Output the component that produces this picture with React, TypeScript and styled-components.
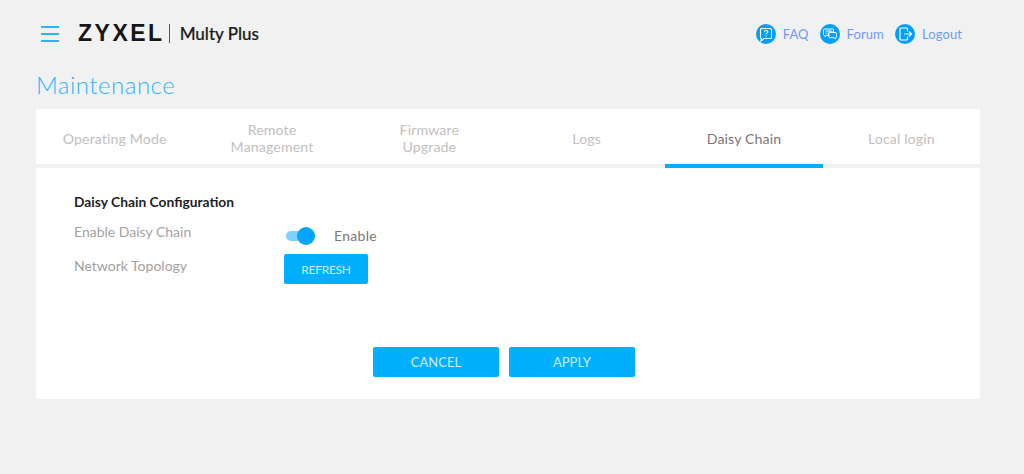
import React from 'react'
import styled, { createGlobalStyle } from 'styled-components'

const GlobalStyle = createGlobalStyle`
  html, body {
    margin: 0;
    padding: 0;
    background: #f1f1f1;
    font-family: "Lato", "Open Sans", sans-serif;
  }
`

const tabs = [
  { label: 'Operating Mode' },
  { label: 'Remote Management' },
  { label: 'Firmware Upgrade' },
  { label: 'Logs' },
  { label: 'Daisy Chain', active: true },
  { label: 'Local login' },
]

export default function App() {
  return (
    <Page>
      <GlobalStyle />
      <Header>
        <Burger aria-label="menu">
          <span />
          <span />
          <span />
        </Burger>
        <Brand>ZYXEL</Brand>
        <Divider />
        <Product>Multy Plus</Product>
        <HeaderLinks>
          <HeaderLink>
            <LinkIcon>
              <svg width="20" height="20" viewBox="0 0 20 20" fill="none" stroke="#fff" strokeWidth="1.1">
                <path d="M5.5 4.5h9a1 1 0 0 1 1 1v8a1 1 0 0 1-1 1H8l-3 2.500.4-2.500a1 1 0 0 1-.9-1v-8a1 1 0 0 1 1-1z" />
                <path d="M8.400 7.900c.1-.9.8-1.400 1.700-1.400s1.700.5 1.700 1.400c0 1.200-1.700 1.200-1.700 2.400" />
                <path d="M10.100 11.400v1" />
              </svg>
            </LinkIcon>
            <LinkText>FAQ</LinkText>
          </HeaderLink>
          <HeaderLink>
            <LinkIcon>
              <svg width="20" height="20" viewBox="0 0 20 20" fill="none" stroke="#fff" strokeWidth="1">
                <path d="M4.500 5h8a1 1 0 0 1 1 1v2H9.800a1 1 0 0 0-1 1v2.500H6.500L5 12.800v-1.300h-.5a1 1 0 0 1-1-1V6a1 1 0 0 1 1-1z" />
                <path d="M9.800 8.500h5.700a1 1 0 0 1 1 1v3.200a1 1 0 0 1-1 1v1.200l-1.600-1.200H9.800a1 1 0 0 1-1-1V9.500a1 1 0 0 1 1-1z" />
                <path d="M5.500 7h6M5.500 9.200h2" />
              </svg>
            </LinkIcon>
            <LinkText>Forum</LinkText>
          </HeaderLink>
          <HeaderLink>
            <LinkIcon>
              <svg width="20" height="20" viewBox="0 0 20 20" fill="none" stroke="#fff" strokeWidth="1.2">
                <path d="M12.500 7.500V5a1 1 0 0 0-1-1H6a1 1 0 0 0-1 1v10a1 1 0 0 0 1 1h5.500a1 1 0 0 0 1-1v-2.500" />
                <path d="M9 10h7.500M14 7.500l2.500 2.500-2.500 2.500" />
              </svg>
            </LinkIcon>
            <LinkText>Logout</LinkText>
          </HeaderLink>
        </HeaderLinks>
      </Header>
      <PageTitle>Maintenance</PageTitle>
      <Panel>
        <TabBar>
          {tabs.map((t) => (
            <Tab key={t.label} $active={t.active}>
              <TabLabel>{t.label}</TabLabel>
            </Tab>
          ))}
        </TabBar>
        <Content>
          <SectionTitle>Daisy Chain Configuration</SectionTitle>
          <FormRow>
            <FieldLabel>Enable Daisy Chain</FieldLabel>
            <Toggle>
              <ToggleTrack />
              <ToggleKnob />
            </Toggle>
            <ToggleText>Enable</ToggleText>
          </FormRow>
          <FormRow>
            <FieldLabel>Network Topology</FieldLabel>
            <SmallButton>REFRESH</SmallButton>
          </FormRow>
          <Actions>
            <ActionButton>CANCEL</ActionButton>
            <ActionButton>APPLY</ActionButton>
          </Actions>
        </Content>
      </Panel>
    </Page>
  )
}

const Page = styled.div`
  width: 1024px;
  height: 474px;
  overflow: hidden;
  background: #f1f1f1;
`
const Header = styled.header`
  display: flex;
  align-items: center;
  height: 67px;
  padding: 0 62px 0 41px;
`
const Burger = styled.div`
  display: flex;
  flex-direction: column;
  gap: 5px;
  width: 18px;
  margin-right: 19px;
  span {
    display: block;
    height: 2px;
    background: #2db4ff;
  }
`
const Brand = styled.div`
  font-family: "Liberation Sans", sans-serif;
  font-size: 23px;
  font-weight: 700;
  letter-spacing: 2.5px;
  color: #161616;
`
const Divider = styled.div`
  width: 1px;
  height: 19px;
  margin: 0 10px 0 4px;
  background: #555;
`
const Product = styled.div`
  font-size: 17px;
  font-weight: 500;
  color: #1c1c1c;
  -webkit-text-stroke: 0.2px #1c1c1c;
`
const HeaderLinks = styled.nav`
  display: flex;
  align-items: center;
  gap: 11px;
  margin-left: auto;
`
const HeaderLink = styled.a`
  display: flex;
  align-items: center;
  gap: 7px;
`
const LinkIcon = styled.span`
  display: flex;
  align-items: center;
  justify-content: center;
  width: 20px;
  height: 20px;
  border-radius: 50%;
  background: #009fff;
`
const LinkText = styled.span`
  font-size: 13px;
  letter-spacing: 0.1px;
  color: #6f9bf5;
`
const PageTitle = styled.h1`
  margin: 0 0 9px 36px;
  height: 33px;
  font-size: 24px;
  line-height: 36px;
  font-weight: 300;
  letter-spacing: 0.5px;
  color: #2db4ff;
`
const Panel = styled.main`
  width: 944px;
  margin-left: 36px;
  background: #fff;
`
const TabBar = styled.div`
  display: grid;
  grid-template-columns: repeat(6, minmax(0, 1fr));
  height: 59px;
  box-sizing: border-box;
  border-bottom: 4px solid #f1f1f1;
`
const Tab = styled.div<{ $active?: boolean }>`
  display: flex;
  align-items: center;
  justify-content: center;
  height: 59px;
  box-sizing: border-box;
  padding: 3px 25px 0;
  border-bottom: 4px solid ${(p) => (p.$active ? '#00aeff' : 'transparent')};
  color: ${(p) => (p.$active ? '#7d7777' : '#c3c0c0')};
`
const TabLabel = styled.span`
  font-size: 14.2px;
  line-height: 17px;
  text-align: center;
  letter-spacing: 0.1px;
`
const Content = styled.div`
  height: 231px;
  box-sizing: border-box;
  padding: 25px 38px 0;
`
const SectionTitle = styled.h2`
  margin: 0 0 9px;
  font-size: 13.8px;
  line-height: 18px;
  font-weight: 700;
  color: #1f1f1f;
`
const FormRow = styled.div`
  display: flex;
  align-items: center;
  height: 30px;
  margin-bottom: 4px;
`
const FieldLabel = styled.div`
  width: 210px;
  margin-top: -7px;
  font-size: 14px;
  color: #a5a1a1;
`
const Toggle = styled.div`
  position: relative;
  width: 31px;
  height: 18px;
  margin-top: 2px;
  margin-right: 19px;
`
const ToggleTrack = styled.div`
  margin: 4px 0 0 2px;
  width: 26px;
  height: 10px;
  border-radius: 5px;
  background: #7ed2ff;
`
const ToggleKnob = styled.div`
  position: absolute;
  top: 0;
  right: 0;
  width: 18px;
  height: 18px;
  border-radius: 50%;
  background: #00a5ff;
`
const ToggleText = styled.div`
  margin-top: 1px;
  font-size: 14px;
  letter-spacing: 0.3px;
  color: #7d7777;
`
const SmallButton = styled.button`
  width: 84px;
  height: 30px;
  padding: 0;
  border: 0;
  border-radius: 2px;
  background: #00b0ff;
  color: #cdeeff;
  font: inherit;
  font-size: 12px;
  letter-spacing: -0.3px;
`
const Actions = styled.div`
  display: flex;
  justify-content: center;
  gap: 10px;
  margin-top: 63px;
  padding-right: 8px;
`
const ActionButton = styled.button`
  width: 126px;
  height: 30px;
  padding: 0;
  border: 0;
  border-radius: 2px;
  background: #00b0ff;
  color: #cdeeff;
  font: inherit;
  font-size: 13px;
`
